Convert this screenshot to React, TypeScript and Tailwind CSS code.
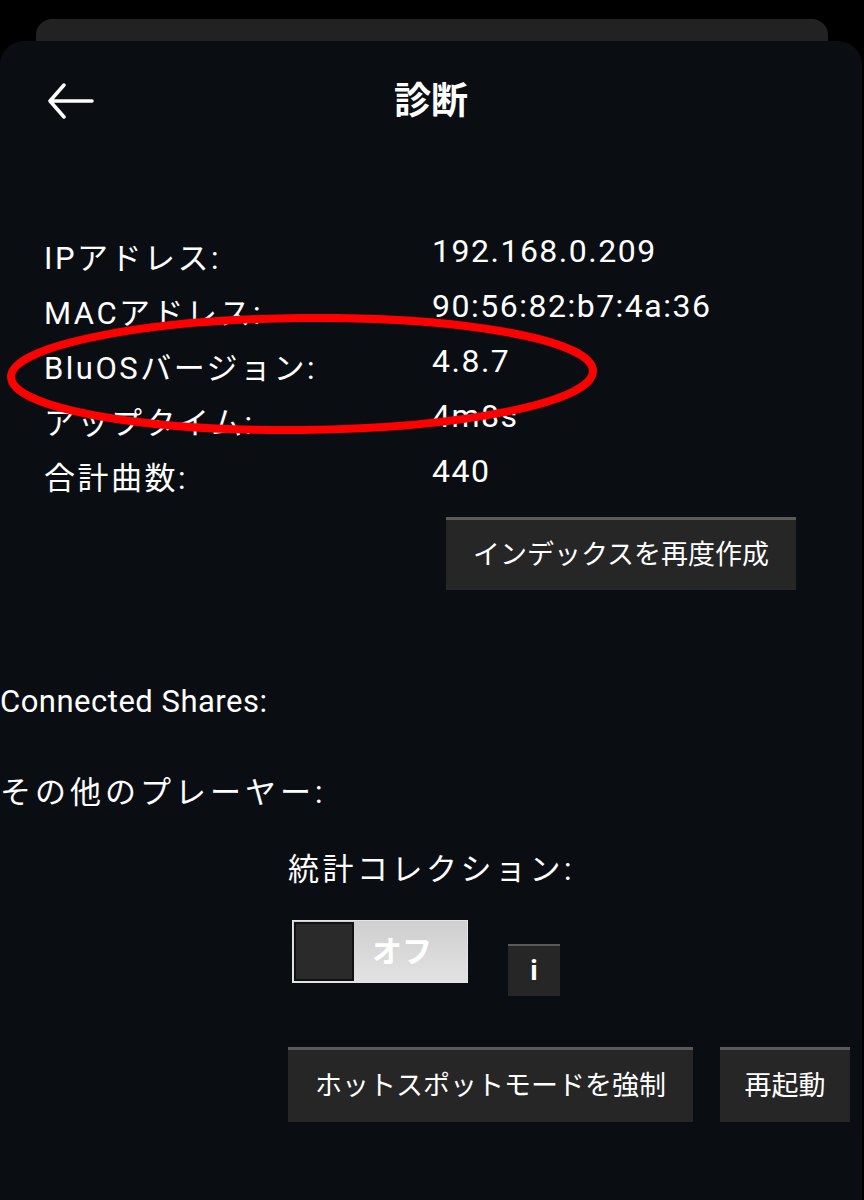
const FONT = "font-['Roboto','Noto_Sans_CJK_JP',sans-serif]";

const INFO = [
  { label: "IPアドレス:", value: "192.168.0.209" },
  { label: "MACアドレス:", value: "90:56:82:b7:4a:36" },
  { label: "BluOSバージョン:", value: "4.8.7" },
  { label: "アップタイム:", value: "4m8s" },
  { label: "合計曲数:", value: "440" },
];

function BackArrow() {
  return (
    <svg width="46" height="36" viewBox="0 0 46 36" fill="none">
      <path d="M16 2 L2 18 L16 34 M2 18 H44" stroke="white" strokeWidth="3.5" strokeLinecap="round" strokeLinejoin="round" />
    </svg>
  );
}

function DarkButton({ children, className = "" }: { children: React.ReactNode; className?: string }) {
  return (
    <button className={`flex items-center justify-center bg-[#262626] border-t-[3px] border-[#5a5a5a] text-white text-[27px] ${className}`}>
      {children}
    </button>
  );
}

export default function App() {
  return (
    <div className={`min-h-[1200px] bg-black flex flex-col pt-[19px] ${FONT}`}>
      {/* stacked sheet behind */}
      <div className="h-[22px] mx-[36px] rounded-t-[16px] bg-[#222222]" />

      <div className="flex-1 mr-[2px] rounded-t-[24px] bg-[#0a0e13] text-white">
        {/* header */}
        <div className="relative flex items-center justify-center h-[40px] mt-[40px]">
          <div className="absolute left-[48px] top-[2px]">
            <BackArrow />
          </div>
          <h1 className="text-[37px] font-bold leading-none">診断</h1>
        </div>

        {/* info */}
        <div className="relative mt-[110px]">
          {INFO.map((row) => (
            <div key={row.label} className="flex items-center h-[55px]">
              <div className="w-[432px] pl-[44px] text-[31px] tracking-[2.5px] leading-none">{row.label}</div>
              <div className="text-[32px] tracking-[1.5px] leading-none pb-[16px]">{row.value}</div>
            </div>
          ))}
          <svg className="absolute left-0 top-[83px]" width="604" height="126" viewBox="0 0 604 126" fill="none">
            <ellipse cx="302" cy="60" rx="291" ry="56" stroke="#ff0000" strokeWidth="8" transform="rotate(-0.6 302 60)" />
          </svg>
        </div>

        <div className="pl-[446px] mt-[11px]">
          <DarkButton className="w-[350px] h-[73px]">インデックスを再度作成</DarkButton>
        </div>

        <div className="mt-[92px] text-[31px] tracking-[0.5px] leading-[40px]">Connected Shares:</div>
        <div className="mt-[51px] text-[31px] tracking-[4px] leading-[40px]">その他のプレーヤー:</div>

        <div className="pl-[288px] mt-[37px]">
          <div className="text-[31px] tracking-[3.5px] leading-[40px]">統計コレクション:</div>

          <div className="flex items-start mt-[30px] pl-[4px]">
            <div className="flex w-[176px] h-[63px] border border-[#e6e6e6] bg-gradient-to-b from-[#cfcfcf] to-[#e2e2e2] p-[1px]">
              <div className="w-[60px] h-full bg-[#2a2a2a] border-2 border-[#111]" />
              <div className="flex-1 flex items-center justify-center pr-[16px] text-[30px] font-bold text-white">オフ</div>
            </div>
            <button className="ml-[40px] mt-[24px] w-[52px] h-[52px] flex items-center justify-center bg-[#262626] border-t-2 border-[#5a5a5a]">
              <span className="text-[28px] font-bold leading-none">i</span>
            </button>
          </div>

          <div className="flex gap-[27px] mt-[51px] pb-[78px]">
            <DarkButton className="w-[405px] h-[75px]">ホットスポットモードを強制</DarkButton>
            <DarkButton className="w-[130px] h-[75px]">再起動</DarkButton>
          </div>
        </div>
      </div>
    </div>
  );
}
